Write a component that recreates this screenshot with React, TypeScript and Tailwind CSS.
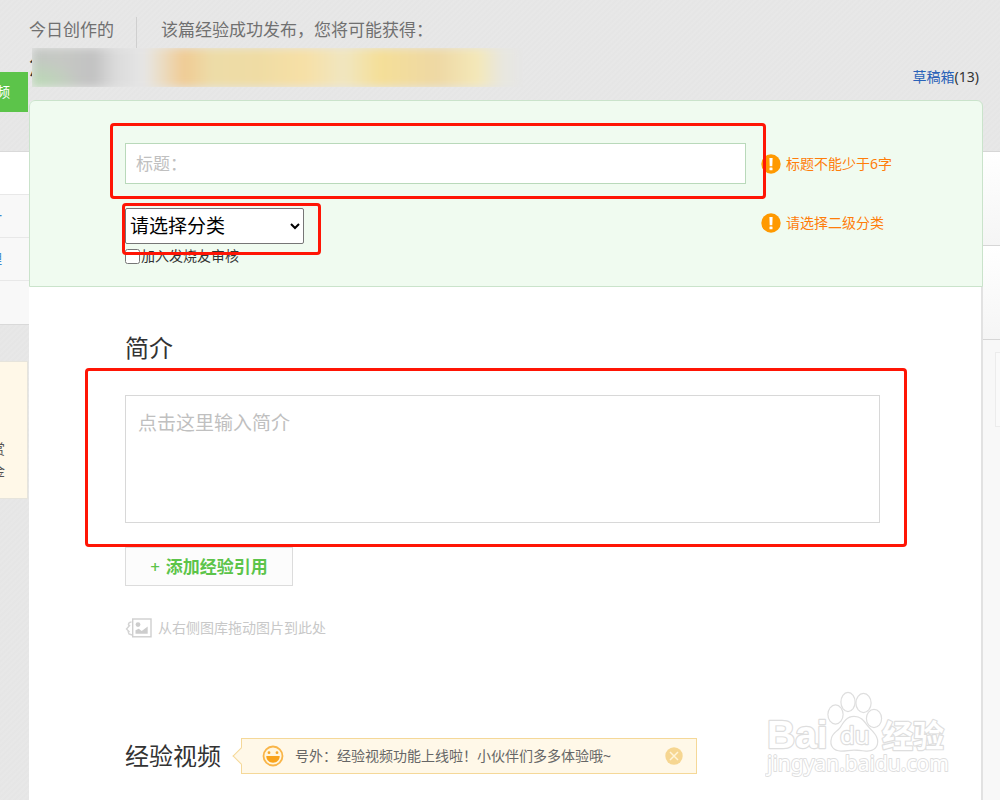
import { useState } from "react";
import type { ReactNode } from "react";

const sideLinks = ["", "统一", "管理", ""];

const categories = ["请选择分类", "美食/营养", "游戏/数码", "手工/爱好", "生活/家居"];

function Highlight({ className }: { className: string }) {
  return (
    <span
      aria-hidden="true"
      className={`pointer-events-none absolute z-10 rounded-[4px] border-[3px] border-[#ff1505] ${className}`}
    />
  );
}

function FieldError({ children }: { children: ReactNode }) {
  return (
    <p className="ml-[15px] flex h-[30px] w-[221px] shrink-0 items-center gap-[5px] text-sm text-[#ff7d0a]">
      <svg viewBox="0 0 20 20" className="h-5 w-5 shrink-0" aria-hidden="true">
        <circle cx="10" cy="10" r="9.7" fill="#ff9900" />
        <path d="M8.4 4h3.2l-.3 8.200H8.700z" fill="#fff" />
        <rect x="8.5" y="13.4" width="3" height="2.8" rx=".5" fill="#fff" />
      </svg>
      {children}
    </p>
  );
}

function ImagesIcon() {
  return (
    <svg viewBox="0 0 28 20" className="h-5 w-7" fill="none" aria-hidden="true">
      <path d="M6.500 4C4 4 2.500 6 4 8M5 7L1.500 11l3 3M3 13l1 3 3 1" stroke="#d4d4d4" strokeWidth="1.400" />
      <rect x="7.700" y="1" width="18.300" height="17.800" fill="#fff" stroke="#cfcfcf" strokeWidth="1.400" />
      <circle cx="13" cy="6.600" r="2.400" fill="#cdcdcd" />
      <path d="M10.500 15.800v-3.600l3.200-1.400 3 2.200 6-4.600v7.400z" fill="#cdcdcd" />
    </svg>
  );
}

function SmileIcon() {
  return (
    <svg viewBox="0 0 22 22" className="h-[22px] w-[22px] shrink-0" aria-hidden="true">
      <circle cx="11" cy="11" r="9.500" fill="#fff6df" stroke="#f9b548" strokeWidth="1.800" />
      <circle cx="7" cy="7.700" r="1.400" fill="#f7a92c" />
      <circle cx="15" cy="7.700" r="1.400" fill="#f7a92c" />
      <path d="M4.300 11h13.400c0 4-3 6.700-6.700 6.700S4.300 15 4.300 11z" fill="#f9a41c" />
    </svg>
  );
}

function Watermark() {
  return (
    <svg
      viewBox="0 0 184 92"
      className="pointer-events-none absolute right-8 bottom-[18px] h-[92px] w-[184px]"
      fill="#fff"
      stroke="#dedede"
      strokeWidth="2.400"
      strokeLinejoin="round"
      paintOrder="stroke"
      aria-hidden="true"
    >
      <text x="2" y="58" fontSize="39" fontWeight="700" fontFamily="Liberation Sans, sans-serif">
        Bai
      </text>
      <ellipse cx="70.500" cy="24.500" rx="7" ry="9" />
      <ellipse cx="83" cy="12" rx="6.500" ry="9" />
      <ellipse cx="98.500" cy="13" rx="7" ry="9" />
      <ellipse cx="109" cy="28.500" rx="7" ry="8.500" />
      <path d="M89 27c7 0 10 5 13 9 4 5 9 8 10 14 1 7-4 11-11 10.500-5-.500-8-1-12-1s-8 1-13 1c-7 0-11-5-9-12 1-5 5-6 9-11 3-5 6-10.500 13-10.500z" />
      <text x="75" y="54" fontSize="24" fontFamily="Noto Sans, sans-serif">
        du
      </text>
      <text x="117" y="57" fontSize="31" fontWeight="700" fontFamily="Noto Sans CJK SC, sans-serif">
        经验
      </text>
      <text x="2" y="81" fontSize="21" strokeWidth="1.800" fontFamily="Noto Sans, sans-serif">
        jingyan.baidu.com
      </text>
    </svg>
  );
}

function LeftRail() {
  return (
    <aside className="w-[29px] shrink-0 overflow-hidden pt-[72px] text-sm">
      <button
        type="button"
        className="flex h-10 w-7 items-center justify-end overflow-hidden bg-[#5cc44a] pr-[18px] whitespace-nowrap text-white"
      >
        视频
      </button>
      <nav className="mt-[39px] border-y border-[#d9d9d9]">
        {sideLinks.map((link, i) => (
          <a
            key={i}
            href="#"
            className="flex h-[43px] items-center justify-end border-b border-[#e8e8e8] bg-[#f8f8f8] pr-[27px] whitespace-nowrap text-[#3f88cc] first:bg-white last:border-b-0"
          >
            {link}
          </a>
        ))}
      </nav>
      <div className="mt-9 flex h-[138px] w-7 flex-col items-end border border-l-0 border-[#e6e4dc] bg-[#fff8e8] pt-[76px] pr-[22px] leading-[22px] whitespace-nowrap text-[#555]">
        <span>悬赏</span>
        <span>奖金</span>
      </div>
    </aside>
  );
}

function RightRail() {
  return (
    <aside className="flex w-[17px] shrink-0 flex-col overflow-hidden pt-[151px]">
      <div className="h-[94px] border-t border-[#d6d6d6] bg-linear-to-b from-white to-[#f5f5f5]" />
      <div className="h-[94px] border-t border-[#d6d6d6] bg-linear-to-b from-white to-[#f5f5f5]" />
      <div className="flex-1 border-t border-[#d6d6d6] bg-[#f8f8f8] pt-3 pl-3">
        <div className="h-[75px] border border-r-0 border-[#ececec] bg-[#fafafa]" />
      </div>
    </aside>
  );
}

export default function App() {
  const [title, setTitle] = useState("");
  const [category, setCategory] = useState(categories[0]);
  const [review, setReview] = useState(false);
  const [intro, setIntro] = useState("");
  const [showTip, setShowTip] = useState(true);

  return (
    <div className="flex min-h-screen bg-[#e6e6e6] bg-[repeating-linear-gradient(135deg,#e5e5e5_0px,#e8e8e8_2px,#e5e5e5_4px)] font-['Noto_Sans','Noto_Sans_CJK_SC',sans-serif] text-[#333]">
      <LeftRail />

      <main className="flex min-w-0 flex-1 flex-col">
        <header className="flex h-[100px] justify-between">
          <div className="pt-[17px]">
            <div className="flex h-[31px] text-[17px] leading-[26px] text-[#707070]">
              <p className="w-[108px] border-r border-[#cfcfcf]">今日创作的</p>
              <p className="pl-6">该篇经验成功发布，您将可能获得：</p>
            </div>
            <div className="relative h-[39px] w-[494px]">
              <span className="block w-6 overflow-hidden text-2xl leading-[36px]">您</span>
              <div className="absolute inset-y-0 right-0 left-[3px] overflow-hidden bg-[#e6e6e6]">
                <div className="h-full bg-[radial-gradient(ellipse_50px_30px_at_0%_100%,#b9dcb3_0%,transparent_100%),linear-gradient(90deg,#c3c7c3_0px,#c6c8c4_30px,#c2c2c2_62px,#dadada_82px,#e6e6e6_112px,#ebdcc2_130px,#f0cb94_152px,#eddca8_180px,#efdca4_225px,#f7e0a6_272px,#f0e6c0_312px,#f5df98_348px,#eed8a4_405px,#f4e8b8_445px,#e8e7df_470px,#e6e6e6_100%)] blur-[4px]" />
              </div>
            </div>
          </div>
          <p className="self-end pr-1 pb-[13px] text-sm whitespace-nowrap">
            <a href="#" className="text-[#2a62b8]">
              草稿箱
            </a>
            (13)
          </p>
        </header>

        <form className="relative flex flex-1 flex-col rounded-t-md border-r-2 border-[#e2e2e2] bg-white">
          <section className="-mr-0.5 rounded-t-md border border-[#cae3cb] bg-[#f0fbf0] pt-[42px] pb-[18px] pl-[95px]">
            <div className="flex items-center">
              <div className="relative min-w-0 flex-1">
                <input
                  type="text"
                  aria-label="标题"
                  placeholder="标题："
                  value={title}
                  onChange={(e) => setTitle(e.target.value)}
                  className="block h-[41px] w-full border border-[#b9d9ba] bg-white px-2.5 text-[17px] placeholder:text-[#c0c0c0] focus:outline-none"
                />
                <Highlight className="-top-5 -right-5 -bottom-[15px] -left-[15px]" />
              </div>
              <FieldError>标题不能少于6字</FieldError>
            </div>

            <div className="mt-6 flex items-start justify-between">
              <div className="relative">
                <select
                  aria-label="分类"
                  value={category}
                  onChange={(e) => setCategory(e.target.value)}
                  className="block h-9 w-[179px] rounded-[2px] border border-[#767676] bg-white text-[19px] text-black"
                >
                  {categories.map((c) => (
                    <option key={c}>{c}</option>
                  ))}
                </select>
                <Highlight className="-top-[5px] -right-[17px] -bottom-[11px] -left-[3px]" />
              </div>
              <FieldError>请选择二级分类</FieldError>
            </div>

            <label className="flex h-6 items-center gap-px text-sm">
              <input
                type="checkbox"
                checked={review}
                onChange={(e) => setReview(e.target.checked)}
                className="h-[15px] w-[15px]"
              />
              加入发烧友审核
            </label>
          </section>

          <section className="pt-[43px] pr-[101px] pb-6 pl-24">
            <h2 className="text-2xl leading-9">简介</h2>
            <div className="relative mt-[29px]">
              <textarea
                aria-label="简介"
                placeholder="点击这里输入简介"
                value={intro}
                onChange={(e) => setIntro(e.target.value)}
                className="block h-32 w-full resize-none border border-[#d8d8d8] bg-white px-3 py-[13px] text-[19px] leading-7 placeholder:text-[#c0c0c0] focus:outline-none"
              />
              <Highlight className="-top-[27px] -right-[27px] -bottom-6 -left-10" />
            </div>

            <button
              type="button"
              className="mt-6 flex h-[39px] w-[168px] items-center justify-center gap-1.5 border border-[#dcdcdc] bg-[#fcfcfc] text-[17px] font-bold text-[#5cc44a]"
            >
              <span className="font-medium">+</span>
              添加经验引用
            </button>

            <p className="mt-8 flex h-5 items-center gap-[5px] text-sm text-[#c8c8c8]">
              <ImagesIcon />
              从右侧图库拖动图片到此处
            </p>

            <div className="mt-[100px] flex h-9 items-center">
              <h2 className="text-2xl leading-9">经验视频</h2>
              {showTip && (
                <div className="relative ml-5 flex h-9 w-[456px] items-center border border-[#f5d898] bg-[#fff8e8] pr-[13px] pl-5 text-sm text-[#666]">
                  <span className="absolute top-[11px] -left-[7px] h-3 w-3 rotate-45 border-b border-l border-[#f5d898] bg-[#fff8e8]" />
                  <SmileIcon />
                  <p className="ml-[11px] flex-1 whitespace-nowrap">
                    号外：经验视频功能上线啦！小伙伴们多多体验哦~
                  </p>
                  <button type="button" aria-label="关闭" onClick={() => setShowTip(false)}>
                    <svg viewBox="0 0 18 18" className="h-[18px] w-[18px]">
                      <circle cx="9" cy="9" r="8.700" fill="#f6d691" />
                      <path d="M5 5l8 8M13 5l-8 8" stroke="#fff4d8" strokeWidth="1.500" />
                    </svg>
                  </button>
                </div>
              )}
            </div>
          </section>

          <Watermark />
        </form>
      </main>

      <RightRail />
    </div>
  );
}
